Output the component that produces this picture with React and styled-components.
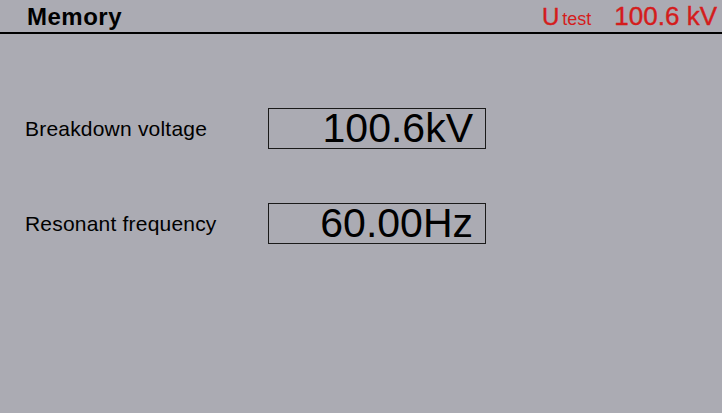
import React from "react";
import styled, { createGlobalStyle } from "styled-components";

const Global = createGlobalStyle`
  html, body { margin: 0; padding: 0; background: #ababb3; }
  body { font-family: "Liberation Sans", Arial, sans-serif; }
`;

const Screen = styled.div`
  width: 722px;
  height: 413px;
  background: #ababb3;
  color: #000;
  font-family: "Liberation Sans", Arial, sans-serif;
  overflow: hidden;
`;

const Header = styled.header`
  display: flex;
  align-items: baseline;
  justify-content: space-between;
  height: 32px;
  border-bottom: 2px solid #000;
  padding: 0 5px 0 27px;
`;

const Title = styled.h1`
  margin: 0;
  font-size: 24px;
  font-weight: bold;
  line-height: 32px;
  letter-spacing: 0.5px;
`;

const Status = styled.div`
  display: flex;
  align-items: baseline;
  color: #d41c1c;
  line-height: 32px;
`;

const Symbol = styled.span`
  font-size: 24px;
  -webkit-text-stroke: 0.4px #d41c1c;
`;

const Sub = styled.span`
  font-size: 18px;
  margin-left: 3px;
  margin-right: 23px;
`;

const StatusValue = styled.span`
  font-size: 26px;
  -webkit-text-stroke: 0.4px #d41c1c;
`;

const Content = styled.main`
  display: flex;
  flex-direction: column;
  gap: 54px;
  padding: 74px 0 0 25px;
`;

const Row = styled.div`
  display: grid;
  grid-template-columns: 243px 218px;
  align-items: center;
`;

const Label = styled.span`
  font-size: 21px;
  line-height: 39px;
  letter-spacing: 0.2px;
`;

const ValueBox = styled.div`
  height: 39px;
  border: 1px solid #1a1a1a;
  font-size: 41px;
  line-height: 39px;
  text-align: right;
  padding-right: 12px;
`;

const rows = [
  { label: "Breakdown voltage", value: "100.6kV" },
  { label: "Resonant frequency", value: "60.00Hz" },
];

export default function App() {
  return (
    <Screen>
      <Global />
      <Header>
        <Title>Memory</Title>
        <Status>
          <Symbol>U</Symbol>
          <Sub>test</Sub>
          <StatusValue>100.6 kV</StatusValue>
        </Status>
      </Header>
      <Content>
        {rows.map((r) => (
          <Row key={r.label}>
            <Label>{r.label}</Label>
            <ValueBox>{r.value}</ValueBox>
          </Row>
        ))}
      </Content>
    </Screen>
  );
}
